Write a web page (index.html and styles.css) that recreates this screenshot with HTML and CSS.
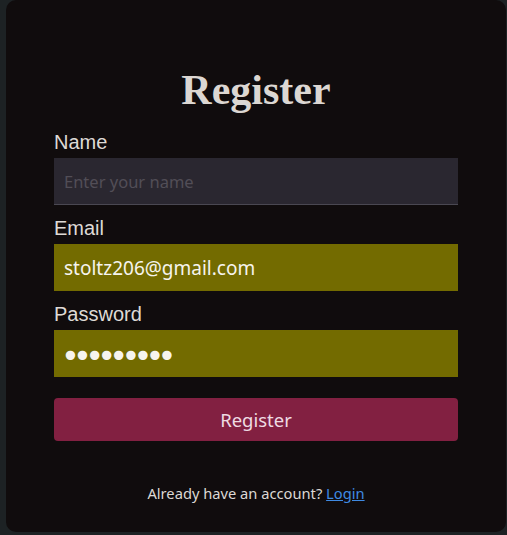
FILE: index.html
```html
<!DOCTYPE html>
<html lang="en">
<head>
<meta charset="utf-8">
<title>Register</title>
<link rel="stylesheet" href="styles.css">
</head>
<body>
<main class="card">
  <h1 class="title">Register</h1>
  <form class="form">
    <div class="field">
      <label class="label" for="name">Name</label>
      <input class="input input-empty" id="name" type="text" placeholder="Enter your name">
    </div>
    <div class="field">
      <label class="label" for="email">Email</label>
      <input class="input input-filled" id="email" type="email" value="stoltz206@gmail.com">
    </div>
    <div class="field">
      <label class="label" for="password">Password</label>
      <input class="input input-filled input-pass" id="password" type="password" value="123456789">
    </div>
    <button class="btn" type="button">Register</button>
  </form>
  <p class="footer">Already have an account? <a class="link" href="#">Login</a></p>
</main>
</body>
</html>
```
FILE: styles.css
```css
html, body {
  margin: 0;
  padding: 0;
  height: 100%;
}
body {
  background: #1d2224;
  overflow: hidden;
}
.card {
  box-sizing: border-box;
  margin-left: 6px;
  width: 500px;
  height: 532px;
  background: #100c0d;
  border-radius: 10px;
  padding: 66px 48px 0 48px;
  display: flex;
  flex-direction: column;
}
.title {
  margin: 0 0 17px 0;
  text-align: center;
  font-family: "Liberation Serif", "Times New Roman", serif;
  font-weight: bold;
  font-size: 42px;
  line-height: 48px;
  color: #dcd7d2;
}
.form {
  display: flex;
  flex-direction: column;
  gap: 12px;
}
.field {
  display: flex;
  flex-direction: column;
  gap: 4px;
}
.label {
  font-family: "Liberation Sans", Arial, sans-serif;
  font-size: 20px;
  line-height: 23px;
  color: #dedad6;
}
.input {
  box-sizing: border-box;
  height: 47px;
  width: 100%;
  margin: 0;
  border: none;
  outline: none;
  padding: 0 10px;
  font-family: "Noto Sans", "Open Sans", sans-serif;
  font-size: 19px;
  color: #f6f4ee;
}
.input-empty {
  background: #2a2730;
  border-bottom: 1px solid #4a4852;
}
.input-empty::placeholder {
  color: #524e57;
  font-size: 16.5px;
}
.input-filled {
  background: #736b00;
}
.input-pass {
  font-family: "DejaVu Sans", sans-serif;
  font-size: 32px;
  letter-spacing: -6.8px;
  padding: 5px 10px 0 7px;
}
.btn {
  margin-top: 9px;
  height: 43px;
  border: none;
  border-radius: 4px;
  background: #822041;
  color: #eedbe3;
  font-family: "Noto Sans", "Open Sans", sans-serif;
  font-size: 18.5px;
  cursor: pointer;
}
.footer {
  margin: 42px 0 0 0;
  text-align: center;
  font-family: "Noto Sans", "Open Sans", sans-serif;
  font-size: 14.7px;
  line-height: 20px;
  color: #dcd8d4;
}
.link {
  color: #3f8ae2;
  text-decoration: underline;
}
```
